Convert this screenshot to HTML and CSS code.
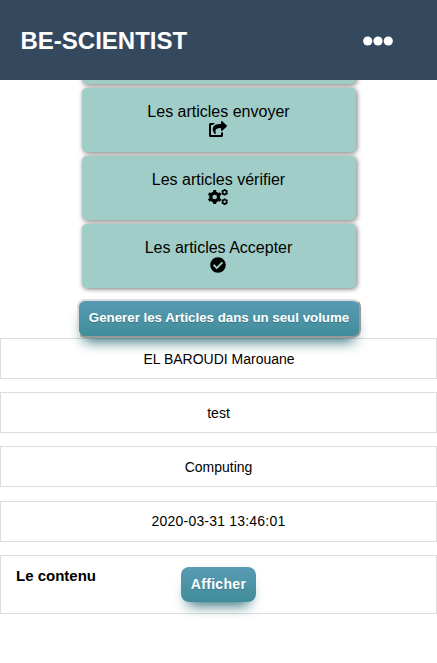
FILE: index.html
```html
<!DOCTYPE html>
<html lang="fr">
<head>
<meta charset="utf-8">
<title>BE-SCIENTIST</title>
<link rel="stylesheet" href="styles.css">
</head>
<body>
<header class="topbar">
  <h1 class="brand">BE-SCIENTIST</h1>
  <svg class="menu" viewBox="0 0 30 10"><circle cx="4.7" cy="5" r="4.6"/><circle cx="15" cy="5" r="4.6"/><circle cx="25.3" cy="5" r="4.6"/></svg>
</header>
<nav class="cards">
  <div class="card card-cut"></div>
  <div class="card"><span>Les articles envoyer</span>
    <svg class="share" viewBox="0 0 576 512"><path d="M568.482 177.448L424.479 313.433C409.3 327.768 384 317.14 384 295.985v-71.963c-144.575.97-205.566 35.113-164.775 171.353 4.483 14.973-12.846 26.567-25.006 17.33C155.252 383.105 120 326.488 120 269.339c0-143.937 117.599-172.5 264-173.312V24.012c0-21.174 25.317-31.768 40.479-17.448l144.003 135.988c10.02 9.463 10.028 25.425 0 34.896zM384 379.128V448H64V128h50.916a11.99 11.99 0 0 0 8.648-3.693c14.953-15.568 32.237-27.89 51.014-37.676C185.708 80.83 181.584 64 169.033 64H48C21.49 64 0 85.49 0 112v352c0 26.51 21.49 48 48 48h352c26.51 0 48-21.49 48-48v-88.806c0-8.288-8.197-14.066-16.011-11.302a71.83 71.83 0 0 1-34.189 3.377c-7.27-1.046-13.8 4.514-13.8 11.859z"/></svg>
  </div>
  <div class="card"><span>Les articles vérifier</span>
    <svg class="cogs" viewBox="0 0 20 16">
      <g transform="translate(6.7 8)"><circle r="3.9" class="ring big"/><path class="teeth-big" d="M0-6.9V-5M0 6.9V5M-6-3.45L-4.4-2.5M6 3.45L4.4 2.5M-6 3.45L-4.4 2.5M6-3.45L4.4-2.5"/></g>
      <g transform="translate(16.6 3.3)"><circle r="2" class="ring"/><path class="teeth" d="M0-3.3V-2.4M0 3.3V2.4M-2.9-1.65L-2-1.2M2.9 1.65L2 1.2M-2.9 1.65L-2 1.2M2.9-1.65L2-1.2"/></g>
      <g transform="translate(16.6 12.7)"><circle r="2" class="ring"/><path class="teeth" d="M0-3.3V-2.4M0 3.3V2.4M-2.9-1.65L-2-1.2M2.9 1.65L2 1.2M-2.9 1.65L-2 1.2M2.9-1.65L2-1.2"/></g>
    </svg>
  </div>
  <div class="card"><span>Les articles Accepter</span>
    <svg class="check" viewBox="0 0 512 512"><path d="M504 256c0 136.967-111.033 248-248 248S8 392.967 8 256 119.033 8 256 8s248 111.033 248 248zM227.314 387.314l184-184c6.248-6.248 6.248-16.379 0-22.627l-22.627-22.627c-6.248-6.249-16.379-6.249-22.628 0L216 308.118l-70.059-70.059c-6.248-6.248-16.379-6.248-22.628 0l-22.627 22.627c-6.248 6.248-6.248 16.379 0 22.627l104 104c6.249 6.249 16.379 6.249 22.628.001z"/></svg>
  </div>
</nav>
<button class="btn btn-volume">Generer les Articles dans un seul volume</button>
<main class="rows">
  <div class="row row-author">EL BAROUDI Marouane</div>
  <div class="row">test</div>
  <div class="row">Computing</div>
  <div class="row row-date">2020-03-31 13:46:01</div>
  <div class="row row-content"><strong class="label">Le contenu</strong><a class="btn btn-show">Afficher</a></div>
</main>
</body>
</html>
```
FILE: styles.css
```css
* { box-sizing: border-box; }
body {
  margin: 0;
  height: 663px;
  overflow: hidden;
  background: #fff;
  color: #000;
  font-family: "Liberation Sans", Arial, sans-serif;
}
.topbar {
  position: relative;
  z-index: 2;
  display: flex;
  justify-content: space-between;
  align-items: center;
  height: 80px;
  padding: 2px 44px 0 20.5px;
  background: #34495e;
}
.brand { margin: 0; color: #fff; font-size: 24px; line-height: 28px; }
.menu { width: 30px; height: 10px; fill: #fff; }
.cards {
  display: flex;
  flex-direction: column;
  align-items: center;
  gap: 4px;
  width: 274px;
  margin-left: 82px;
}
.card {
  display: flex;
  flex-direction: column;
  align-items: center;
  width: 100%;
  height: 64px;
  padding: 14px 1px 0 0;
  border-radius: 5px;
  background: #a0cdc7;
  box-shadow: 1px 1px 5px rgba(0, 0, 0, .55);
  font-size: 16px;
  line-height: 19px;
}
.card-cut { height: 24px; margin-top: -20px; padding: 0; }
.card svg { flex: none; margin-right: 1px; }
.share { width: 18px; height: 16px; }
.cogs { width: 20px; height: 16px; }
.check { width: 16px; height: 16px; }
.ring { fill: none; stroke: #000; stroke-width: 1.6; }
.ring.big { stroke-width: 3.2; }
.teeth { stroke: #000; stroke-width: 1.6; }
.teeth-big { stroke: #000; stroke-width: 3; }
.btn {
  display: block;
  color: #fff;
  background: linear-gradient(#599bb3, #408c99);
  box-shadow: 0 10px 14px -7px #276873;
  border-radius: 8px;
  font-family: "Liberation Sans", Arial, sans-serif;
  font-weight: bold;
  text-align: center;
  text-shadow: 0 1px 0 #3d768a;
  white-space: nowrap;
}
.btn-volume {
  position: relative;
  z-index: 1;
  width: 284px;
  height: 39px;
  margin: 11px 0 0 77px;
  padding: 0 0 2px;
  border: 2px solid;
  border-color: #ddd #999 #999 #ddd;
  font-size: 13.3px;
  background-origin: border-box;
}
.rows { display: flex; flex-direction: column; gap: 13px; }
.row {
  height: 41px;
  border: 1px solid #ddd;
  font-size: 14px;
  line-height: 40px;
  text-align: center;
}
.row-author { padding-left: 1px; }
.row-date { margin-top: 1px; line-height: 39px; letter-spacing: .2px; }
.row-content { display: flex; height: 59px; padding: 11px 0 0 15px; }
.label { width: 165px; font-size: 15px; line-height: 17px; text-align: left; }
.btn-show { width: 75px; height: 35px; font-size: 14px; line-height: 34px; letter-spacing: .3px; }
```
